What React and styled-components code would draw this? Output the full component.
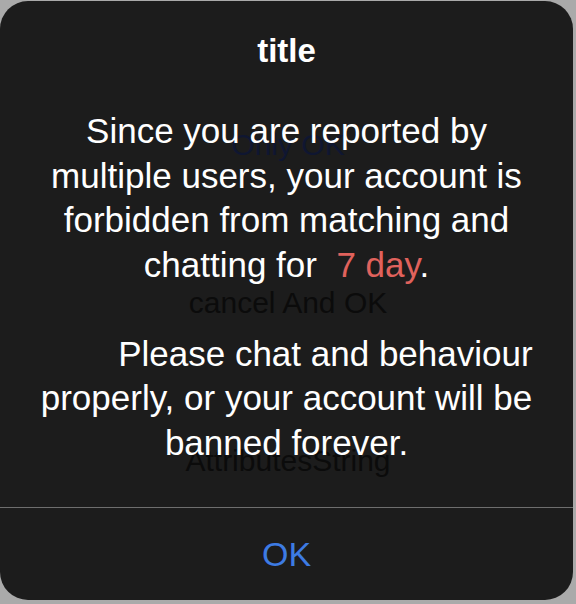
import React from "react";
import styled, { createGlobalStyle } from "styled-components";

const GlobalStyle = createGlobalStyle`
  html, body {
    margin: 0;
    padding: 0;
  }
  body {
    background: #aaaaaa;
    font-family: "Liberation Sans", Arial, sans-serif;
  }
`;

const Screen = styled.div`
  position: relative;
  width: 576px;
  height: 604px;
  overflow: hidden;
  background: #aaaaaa;
`;

/* demo buttons of the page behind the alert */
const ButtonList = styled.div`
  position: relative;
  z-index: 1;
  display: flex;
  flex-direction: column;
  align-items: center;
  gap: 118px;
  padding-top: 125px;
  pointer-events: none;
`;

const DemoButton = styled.div`
  font-size: 30px;
  line-height: 40px;
  color: ${(p) => (p.$tint ? "#0f1631" : "#0b0b0b")};
`;

const Alert = styled.div`
  position: absolute;
  left: 0;
  top: 1px;
  width: 573px;
  height: 599px;
  border-radius: 28px;
  background: #1c1c1c;
  display: flex;
  flex-direction: column;
`;

const Body = styled.div`
  position: relative;
  z-index: 2;
  flex: 1;
  display: flex;
  flex-direction: column;
  align-items: center;
  padding: 30px 30px 0;
`;

const Title = styled.div`
  font-size: 33px;
  line-height: 40px;
  font-weight: 700;
  color: #ffffff;
`;

const Message = styled.div`
  margin-top: 38px;
  font-size: 35px;
  line-height: 44.5px;
  color: #ffffff;
  text-align: center;
  white-space: pre-wrap;
`;

const Highlight = styled.span`
  color: #e0625c;
`;

const Actions = styled.div`
  position: relative;
  z-index: 2;
  height: 92px;
  border-top: 1px solid #6e6e6e;
  display: flex;
  align-items: center;
  justify-content: center;
`;

const ActionButton = styled.button`
  border: 0;
  background: none;
  padding: 0;
  font-family: inherit;
  font-size: 34px;
  color: #3d7be3;
  cursor: pointer;
`;

export default function App() {
  return (
    <Screen>
      <GlobalStyle />
      <ButtonList>
        <DemoButton $tint>Only OK</DemoButton>
        <DemoButton>cancel And OK</DemoButton>
        <DemoButton>AttributesString</DemoButton>
      </ButtonList>
      <Alert>
        <Body>
          <Title>title</Title>
          <Message>
            {"Since you are reported by multiple users, your account is forbidden from matching and chatting for  "}
            <Highlight>7 day</Highlight>
            {".\n\n        Please chat and behaviour properly, or your account will be banned forever."}
          </Message>
        </Body>
        <Actions>
          <ActionButton>OK</ActionButton>
        </Actions>
      </Alert>
    </Screen>
  );
}
